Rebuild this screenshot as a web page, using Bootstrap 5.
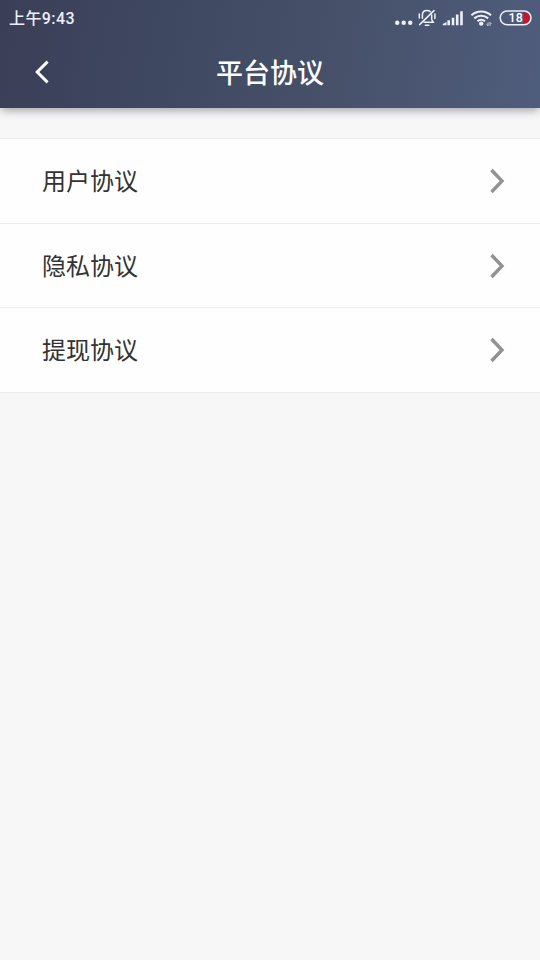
<!DOCTYPE html>
<html lang="zh-CN">
<head>
<meta charset="utf-8">
<meta name="viewport" content="width=device-width, initial-scale=1">
<title>平台协议</title>
<link href="https://cdn.jsdelivr.net/npm/bootstrap@5.3.0/dist/css/bootstrap.min.css" rel="stylesheet">
<style>
  body { background: #f7f7f8; font-family: Roboto, "Noto Sans CJK SC", sans-serif; color: #333; }
  svg { display: block; flex: none; }
  .app-header { height: 108px; background: linear-gradient(100deg, #3b3e57 0%, #3f4861 30%, #465069 60%, #4f5d7c 100%); box-shadow: 0 3px 9px -1px rgba(40, 35, 50, .45); }
  .status-bar { height: 36px; padding: 0 8px 0 9px; color: #eceffc; }
  .clock { font-size: 16px; font-weight: 500; line-height: 34px; padding-top: 2px; letter-spacing: .4px; }
  .title-bar { height: 72px; padding: 0 32px; }
  .page-title { font-size: 27px; font-weight: 500; line-height: 68px; padding-top: 4px; color: #fbfcff; }
  .agreements { margin-top: 30px; border-top: 1px solid #ececee; border-bottom: 1px solid #ececee; }
  .agreement { height: 84px; padding: 0 35px 0 42px; font-size: 24px; color: #333; background: #fefefe; border-color: #eeeef0; }
  .agreement:first-child { height: 85px; }
  .agreement span { padding-top: 2px; }
</style>
</head>
<body>
<header class="app-header position-relative">
  <div class="status-bar d-flex align-items-center justify-content-between">
    <span class="clock">上午9:43</span>
    <svg width="140" height="36" viewBox="392 0 140 36" fill="none" stroke="#eceffc" aria-hidden="true">
      <g fill="#eceffc" stroke="none">
        <circle cx="397.2" cy="22.8" r="2.2"/><circle cx="403.7" cy="22.8" r="2.2"/><circle cx="410.2" cy="22.8" r="2.2"/>
        <path d="M442.8 25.2v-1.2l3.7-2v3.2zM447.4 20.3h2.6v4.9h-2.6zM451.7 17.7h2.6v7.5h-2.6zM455.9 14.4h2.6v10.8h-2.6zM460.2 11.2h2.6v14h-2.6z"/>
        <circle cx="481.2" cy="23.6" r="2.2"/>
      </g>
      <g stroke-width="1.5" stroke-linecap="round" stroke-linejoin="round">
        <path d="M422.4 18.2v-3c0-3 1.9-4.6 4.6-4.6 1.4 0 2.5.4 3.3 1.2M431.7 15v4.3c0 1.3.8 1.9 1.9 3h-9.4M425.3 25.3h3.6M434 10.6L419.6 24.6M419.3 13.9v4.2M434.9 13.9v4.6"/>
      </g>
      <g stroke-width="2.1">
        <path d="M471.4 15.3c5.5-5.1 14.1-5.1 19.6 0M474.3 18.4c3.9-3.5 9.9-3.5 13.8 0M477.4 21.3c2.2-1.9 5.4-1.9 7.6 0"/>
      </g>
      <path d="M488 22.4v3.4M486.6 24.4l1.4 1.4M490 25.8v-3.4M491.4 23.8L490 22.4" stroke-width="1" opacity=".8"/>
      <path d="M523.5 12.3h.7a5.6 5.6 0 0 1 0 11.2h-.7z" fill="#c9142a" stroke="none"/>
      <rect x="500.2" y="11" width="30.8" height="13.8" rx="6.9" stroke-width="1.5"/>
      <text x="508.6" y="22.3" font-size="12.5" font-weight="500" fill="#fff" stroke="none">18</text>
    </svg>
  </div>
  <div class="title-bar d-flex align-items-center justify-content-between">
    <svg width="20" height="26" viewBox="0 0 20 26" fill="none" stroke="#fbfcff" stroke-width="3" aria-hidden="true"><path d="M15.6 2.6L5.2 13l10.4 10.4"/></svg>
    <h1 class="page-title mb-0">平台协议</h1>
    <svg width="20" height="26" aria-hidden="true"></svg>
  </div>
</header>
<main>
  <div class="agreements list-group list-group-flush rounded-0">
    <a href="#" class="agreement list-group-item d-flex align-items-center justify-content-between">
      <span>用户协议</span>
      <svg width="16" height="26" viewBox="0 0 16 26" fill="none" stroke="#929292" stroke-width="3.4" aria-hidden="true"><path d="M2.5 2L13 13 2.5 24"/></svg>
    </a>
    <a href="#" class="agreement list-group-item d-flex align-items-center justify-content-between">
      <span>隐私协议</span>
      <svg width="16" height="26" viewBox="0 0 16 26" fill="none" stroke="#929292" stroke-width="3.4" aria-hidden="true"><path d="M2.5 2L13 13 2.5 24"/></svg>
    </a>
    <a href="#" class="agreement list-group-item d-flex align-items-center justify-content-between">
      <span>提现协议</span>
      <svg width="16" height="26" viewBox="0 0 16 26" fill="none" stroke="#929292" stroke-width="3.4" aria-hidden="true"><path d="M2.5 2L13 13 2.5 24"/></svg>
    </a>
  </div>
</main>
<script src="https://cdn.jsdelivr.net/npm/bootstrap@5.3.0/dist/js/bootstrap.bundle.min.js"></script>
</body>
</html>
